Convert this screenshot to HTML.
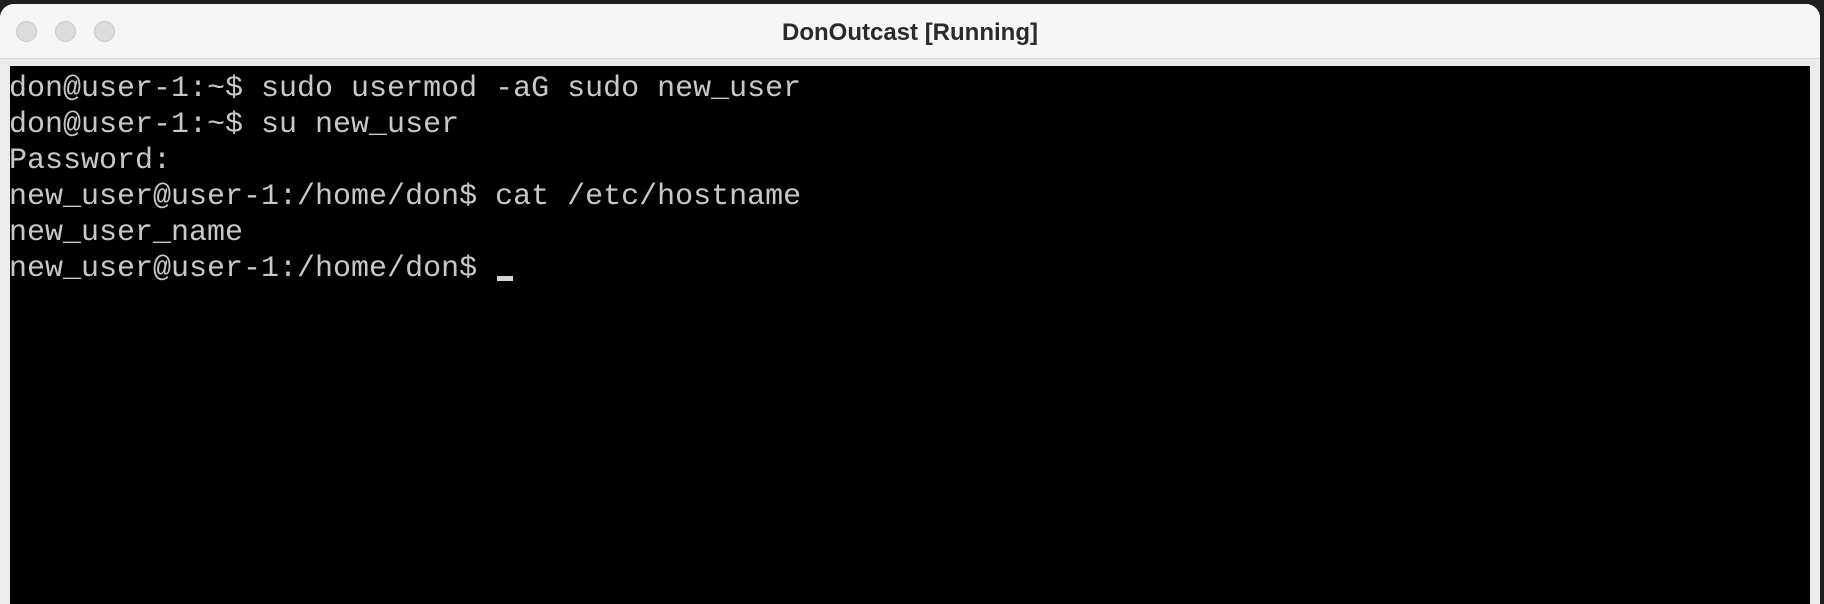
<!DOCTYPE html>
<html><head><style>
html,body{margin:0;padding:0;width:1824px;height:584px;overflow:hidden;background:#1e1e1e;}
.win{position:absolute;left:0;top:4px;width:1820px;height:600px;background:#ececec;border-radius:14px 14px 0 0;overflow:hidden;}
.title{position:absolute;left:0;top:0;width:100%;height:54px;background:#f6f6f6;border-bottom:1px solid #d6d6d6;}
.dot{position:absolute;top:17px;width:21px;height:21px;border-radius:50%;background:#dcdcdc;border:1px solid #c8c8c8;box-sizing:border-box;}
.ttl{position:absolute;left:0;right:0;top:15px;text-align:center;font:bold 24px "Liberation Sans",sans-serif;color:#2a2a2a;}
.term{position:absolute;left:10px;top:62px;width:1800px;height:540px;background:#000;}
pre{margin:0;position:absolute;left:-1px;top:5px;font:30px/36px "Liberation Mono",monospace;color:#c8c8c8;}
.cur{position:absolute;left:487px;top:210px;width:16px;height:5px;background:#d4d4d4;}
</style></head><body>
<div class="win">
 <div class="title">
  <div class="dot" style="left:16px"></div>
  <div class="dot" style="left:55px"></div>
  <div class="dot" style="left:94px"></div>
  <div class="ttl">DonOutcast [Running]</div>
 </div>
 <div class="term">
<pre>don@user-1:~$ sudo usermod -aG sudo new_user
don@user-1:~$ su new_user
Password:
new_user@user-1:/home/don$ cat /etc/hostname
new_user_name
new_user@user-1:/home/don$ </pre>
<div class="cur"></div>
 </div>
</div>
</body></html>
